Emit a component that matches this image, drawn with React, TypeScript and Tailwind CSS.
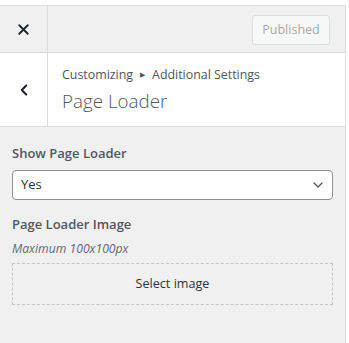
import { ChevronDown, ChevronLeft, X } from "lucide-react";

export default function App() {
  return (
    <div
      className="h-[343px] w-[349px] overflow-hidden bg-white pt-[5px] text-[#50575e]"
      style={{ fontFamily: '"Open Sans", "Noto Sans", sans-serif' }}
    >
      <div className="flex h-[338px] w-[346px] flex-col border-r border-t border-[#dcdcde] bg-[#f0f0f1]">
        <div className="flex h-[47px] shrink-0 border-b border-[#dcdcde]">
          <div className="flex w-[48px] items-center justify-center border-r border-[#dcdcde] text-[#1d2327]">
            <X size={17} strokeWidth={2.6} />
          </div>
          <div className="flex flex-1 items-center justify-end pr-[15px] pt-[2px]">
            <div className="flex h-[30px] w-[78px] items-center justify-center rounded-[3px] border border-[#dcdcde] bg-[#f6f7f7] text-[12.5px] text-[#a7aaad]">
              Published
            </div>
          </div>
        </div>

        <div className="flex h-[74px] shrink-0 border-b border-[#dcdcde] bg-white">
          <div className="flex w-[48px] items-center justify-center border-r border-[#dcdcde] text-[#1d2327]">
            <ChevronLeft size={18} strokeWidth={2.6} />
          </div>
          <div className="flex flex-col justify-center pl-[14px]">
            <div className="flex items-center text-[12.4px] leading-[18px]">
              Customizing
              <span className="mx-[7px] text-[7px]">▶</span>
              Additional Settings
            </div>
            <div className="mt-[5px] text-[18.8px] font-light leading-[24px]">Page Loader</div>
          </div>
        </div>

        <div className="flex flex-col px-[12px] pt-[16px]">
          <div className="text-[13px] font-semibold leading-[20px] text-[#50575e]">Show Page Loader</div>
          <div className="mt-[7px] flex h-[30px] w-[321px] items-center justify-between rounded-[4px] border border-[#8c8f94] bg-white pl-[8px] pr-[6px] text-[13px] text-[#2c3338]">
            Yes
            <ChevronDown size={16} strokeWidth={2} className="text-[#50575e]" />
          </div>
          <div className="mt-[14px] text-[13px] font-semibold leading-[20px]">Page Loader Image</div>
          <div className="mt-[6px] text-[12.2px] italic leading-[18px] text-[#646970]">Maximum 100x100px</div>
          <div className="mt-[5px] flex h-[42px] w-[321px] items-center justify-center border border-dashed border-[#c3c4c7] text-[12.6px] text-[#2c3338]">
            Select image
          </div>
        </div>
      </div>
    </div>
  );
}
